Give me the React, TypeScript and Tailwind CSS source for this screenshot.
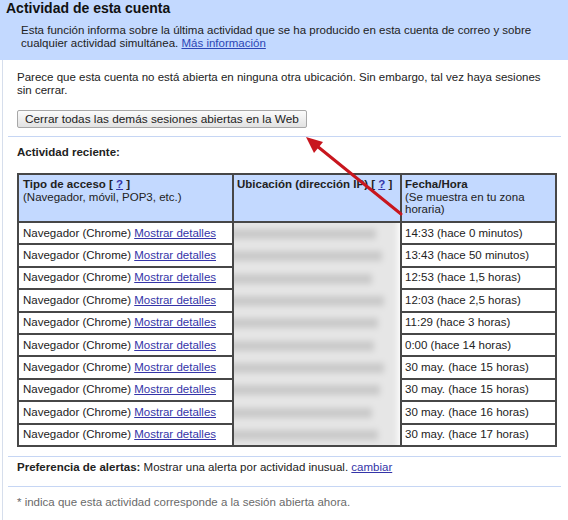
import React from "react";

const sessions = [
  "14:33 (hace 0 minutos)",
  "13:43 (hace 50 minutos)",
  "12:53 (hace 1,5 horas)",
  "12:03 (hace 2,5 horas)",
  "11:29 (hace 3 horas)",
  "0:00 (hace 14 horas)",
  "30 may. (hace 15 horas)",
  "30 may. (hace 15 horas)",
  "30 may. (hace 16 horas)",
  "30 may. (hace 17 horas)",
];

// widths of the hidden IP lines, one per session row
const ipWidths = [150, 156, 146, 158, 152, 148, 158, 154, 146, 152];

const cell = "border-2 border-[#474747]";
const link = "text-[#3434a8] underline";

function HelpMark() {
  return (
    <span className="font-bold">
      [ <a className={link}>?</a> ]
    </span>
  );
}

function Divider({ className }: { className?: string }) {
  return <div className={`h-px bg-[#c6d6f4] ${className ?? ""}`} />;
}

export default function App() {
  return (
    <div className="relative w-[568px] h-[520px] overflow-hidden bg-white font-['Liberation_Sans',Arial,sans-serif] text-[11.5px] text-[#222]">
      <div className="h-[60px] bg-[#c3d9ff]">
        <h1 className="pl-[6px] text-[14px] font-bold leading-[16px] text-[#111]">
          Actividad de esta cuenta
        </h1>
        <p className="ml-[21px] mt-[8px] w-[524px] leading-[13px]">
          Esta función informa sobre la última actividad que se ha producido en esta cuenta de correo y
          sobre cualquier actividad simultánea.{" "}
          <a className="text-[#2c46b6] underline">Más información</a>
        </p>
      </div>

      <div className="ml-[2px] h-[460px] border-l border-[#d6deec] pl-[5px] pr-[7px] pt-[11px]">
        <p className="ml-[9px] w-[530px] leading-[13px]">
          Parece que esta cuenta no está abierta en ninguna otra ubicación. Sin embargo, tal vez haya
          sesiones sin cerrar.
        </p>

        <div className="ml-[9px] mt-[13px] flex">
          <button className="h-[18px] rounded-[2px] border border-[#a8a8a8] bg-linear-to-b from-[#fbfbfb] to-[#e2e2e2] px-[7px] text-[11.8px] leading-[16px] text-[#222]">
            Cerrar todas las demás sesiones abiertas en la Web
          </button>
        </div>

        <Divider className="mt-[8px]" />

        <div className="ml-[9px] mt-[9px] font-bold leading-[13px]">Actividad reciente:</div>

        <table className="ml-[9px] mt-[14px] w-[538px] table-fixed border-collapse">
          <colgroup>
            <col className="w-[215px]" />
            <col className="w-[168px]" />
            <col className="w-[155px]" />
          </colgroup>
          <thead>
            <tr className="h-[48px] bg-[#c3d9ff]">
              <th className={`${cell} px-[4px] pt-[3px] text-left align-top font-normal leading-[12.5px]`}>
                <div className="font-bold">
                  Tipo de acceso <HelpMark />
                </div>
                <div>(Navegador, móvil, POP3, etc.)</div>
              </th>
              <th className={`${cell} px-[3px] pt-[3px] text-left align-top leading-[12.5px] whitespace-nowrap`}>
                <span className="font-bold">Ubicación (dirección IP) </span>
                <HelpMark />
              </th>
              <th className={`${cell} px-[3px] pt-[3px] text-left align-top font-normal leading-[12.5px]`}>
                <div className="font-bold">Fecha/Hora</div>
                <div>(Se muestra en tu zona horaria)</div>
              </th>
            </tr>
          </thead>
          <tbody>
            {sessions.map((when, i) => (
              <tr key={i} className="h-[22.3px]">
                <td className={`${cell} px-[4px] py-0 leading-[13px] whitespace-nowrap`}>
                  Navegador (Chrome) <a className={link}>Mostrar detalles</a>
                </td>
                {i === 0 && (
                  <td rowSpan={sessions.length} className={`${cell} p-0 align-top`}>
                    <div className="relative h-[222px] overflow-hidden">
                      <div className="absolute -left-[8px] -top-[6px] flex h-[236px] w-[172px] flex-col bg-[#e6e6e6] pt-[6px] blur-[3px]">
                        {ipWidths.map((w, j) => (
                          <div key={j} className="flex h-[22.3px] items-center">
                            <div className="h-[10px] bg-[#c9c9c9]" style={{ width: w }} />
                          </div>
                        ))}
                      </div>
                    </div>
                  </td>
                )}
                <td className={`${cell} px-[3px] py-0 leading-[13px] whitespace-nowrap`}>{when}</td>
              </tr>
            ))}
          </tbody>
        </table>

        <Divider className="mt-[9px]" />

        <p className="ml-[9px] mt-[4px] leading-[13px]">
          <span className="font-bold">Preferencia de alertas:</span> Mostrar una alerta por actividad
          inusual. <a className={link}>cambiar</a>
        </p>

        <Divider className="mt-[12px]" />

        <p className="ml-[9px] mt-[9px] leading-[13px] text-[#6a6a6a]">
          * indica que esta actividad corresponde a la sesión abierta ahora.
        </p>
      </div>

      {/* callout arrow pointing at the sign-out button */}
      <svg
        className="pointer-events-none absolute left-0 top-0"
        width="568"
        height="520"
        viewBox="0 0 568 520"
      >
        <line x1="401" y1="214" x2="317" y2="146" stroke="#c8161e" strokeWidth="3" strokeLinecap="round" />
        <polygon points="306,137 323,142 314,153" fill="#c8161e" />
      </svg>
    </div>
  );
}
